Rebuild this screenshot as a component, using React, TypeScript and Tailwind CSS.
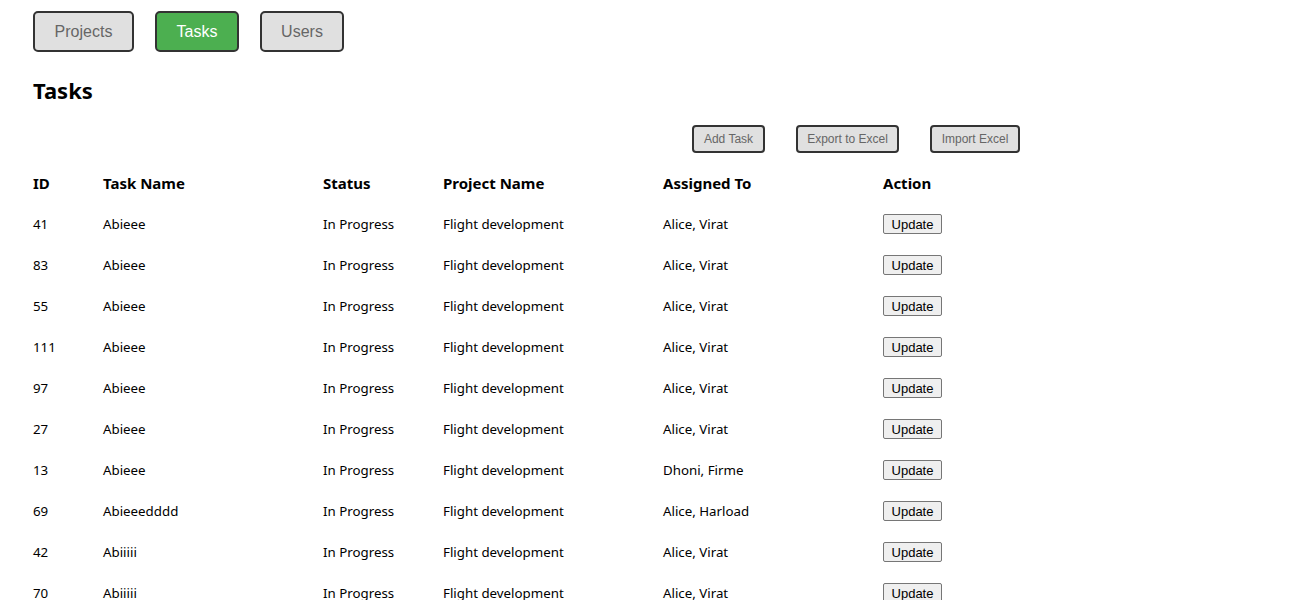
import React from 'react';

const rows = [
    { id: 41, name: 'Abieee', status: 'In Progress', project: 'Flight development', assigned: 'Alice, Virat' },
    { id: 83, name: 'Abieee', status: 'In Progress', project: 'Flight development', assigned: 'Alice, Virat' },
    { id: 55, name: 'Abieee', status: 'In Progress', project: 'Flight development', assigned: 'Alice, Virat' },
    { id: 111, name: 'Abieee', status: 'In Progress', project: 'Flight development', assigned: 'Alice, Virat' },
    { id: 97, name: 'Abieee', status: 'In Progress', project: 'Flight development', assigned: 'Alice, Virat' },
    { id: 27, name: 'Abieee', status: 'In Progress', project: 'Flight development', assigned: 'Alice, Virat' },
    { id: 13, name: 'Abieee', status: 'In Progress', project: 'Flight development', assigned: 'Dhoni, Firme' },
    { id: 69, name: 'Abieeedddd', status: 'In Progress', project: 'Flight development', assigned: 'Alice, Harload' },
    { id: 42, name: 'Abiiiii', status: 'In Progress', project: 'Flight development', assigned: 'Alice, Virat' },
    { id: 70, name: 'Abiiiii', status: 'In Progress', project: 'Flight development', assigned: 'Alice, Virat' },
];

const tabs = [
    { label: 'Projects', width: 'w-[101px]' },
    { label: 'Tasks', width: 'w-[84px]' },
    { label: 'Users', width: 'w-[84px]' },
];

const App: React.FC = () => {
    return (
        <div className="min-h-screen bg-white text-black pl-[33px] pt-[11px] font-['Noto_Sans',sans-serif]">
            <div className="flex gap-[21px] font-['Liberation_Sans',Arial,sans-serif]">
                {tabs.map((t) => (
                    <button
                        key={t.label}
                        className={`h-[41px] ${t.width} text-base border-2 border-[#333] rounded-[5px] ${
                            t.label === 'Tasks' ? 'bg-[#4caf50] text-white' : 'bg-[#e0e0e0] text-[#666]'
                        }`}
                    >
                        {t.label}
                    </button>
                ))}
            </div>

            <h2 className="mt-[25px] text-[22px] font-bold leading-[26px]">Tasks</h2>

            <div className="flex gap-[31px] ml-[659px] mt-[22px] font-['Liberation_Sans',Arial,sans-serif]">
                <button className="h-[28px] w-[73px] text-xs text-[#666] bg-[#e0e0e0] border-2 border-[#333] rounded-[4px]">Add Task</button>
                <button className="h-[28px] w-[103px] text-xs text-[#666] bg-[#e0e0e0] border-2 border-[#333] rounded-[4px]">Export to Excel</button>
                <button className="h-[28px] w-[90px] text-xs text-[#666] bg-[#e0e0e0] border-2 border-[#333] rounded-[4px]">Import Excel</button>
            </div>

            <table className="mt-[10px] border-collapse text-[13.3px] table-fixed">
                <thead>
                    <tr className="h-[41px] text-left text-[15px]">
                        <th className="w-[70px] font-bold">ID</th>
                        <th className="w-[220px] font-bold">Task Name</th>
                        <th className="w-[120px] font-bold">Status</th>
                        <th className="w-[220px] font-bold">Project Name</th>
                        <th className="w-[220px] font-bold">Assigned To</th>
                        <th className="w-[220px] font-bold">Action</th>
                    </tr>
                </thead>
                <tbody>
                    {rows.map((r) => (
                        <tr key={r.id} className="h-[41px]">
                            <td>{r.id}</td>
                            <td>{r.name}</td>
                            <td>{r.status}</td>
                            <td>{r.project}</td>
                            <td>{r.assigned}</td>
                            <td>
                                <button className="h-[20px] w-[59px] text-[13px] bg-[#efefef] border border-[#767676] rounded-[2px] font-['Liberation_Sans',Arial,sans-serif] leading-none">
                                    Update
                                </button>
                            </td>
                        </tr>
                    ))}
                </tbody>
            </table>
        </div>
    );
};

export default App;
